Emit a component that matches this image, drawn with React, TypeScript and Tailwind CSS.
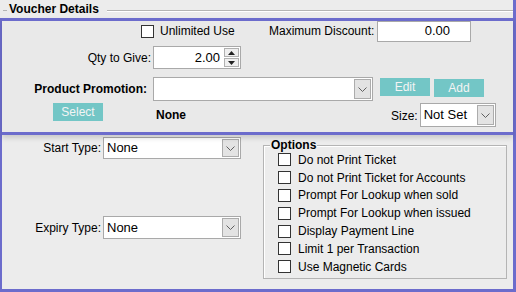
import React from 'react';

const purple = 'border-[#6c6ccc]';

const Chevron: React.FC = () => (
  <svg width="9" height="5" viewBox="0 0 9 5">
    <path d="M0.5 0.5 L4.5 4.5 L8.5 0.5" stroke="#606060" strokeWidth="1" fill="none" />
  </svg>
);

const Check: React.FC = () => (
  <span className="block h-[13px] w-[13px] shrink-0 border border-[#333] bg-white" />
);

const Combo: React.FC<{ value?: string; w: string; h: string }> = ({ value, w, h }) => (
  <div className={`flex shrink-0 items-stretch border border-[#a9a9a9] bg-white ${w} ${h}`}>
    <span className="flex flex-1 items-center pl-[3px] text-[13px]">{value}</span>
    <span className="m-px flex w-[17px] items-center justify-center border border-[#acacac] bg-[#e3e3e3]">
      <Chevron />
    </span>
  </div>
);

const TealButton: React.FC<{ label: string; className?: string }> = ({ label, className = '' }) => (
  <div
    className={`flex h-[18px] w-[50px] shrink-0 items-center justify-center bg-[#73c6c6] text-[12px] text-[#f4f4f4] ${className}`}
  >
    {label}
  </div>
);

const options = [
  'Do not Print Ticket',
  'Do not Print Ticket for Accounts',
  'Prompt For Lookup when sold',
  'Prompt For Lookup when issued',
  'Display Payment Line',
  'Limit 1 per Transaction',
  'Use Magnetic Cards',
];

export default function App() {
  return (
    <div
      className={`flex h-[292px] w-[516px] flex-col border-r-[3px] bg-[#ececec] text-[12px] leading-[14px] text-black ${purple}`}
      style={{ fontFamily: '"Liberation Sans", Arial, sans-serif' }}
    >
      {/* group header */}
      <div className="flex h-[18px] shrink-0 items-center pl-[3px]">
        <span className="mt-[3px] h-px w-[4px] bg-[#b4b4b4]" />
        <span className="ml-[2px] text-[12px] font-bold">Voucher Details</span>
        <span className="mt-[3px] ml-[8px] h-[2px] flex-1 border-t border-[#b4b4b4] bg-white" />
      </div>

      <div className={`flex flex-1 flex-col border-b-[3px] border-l-2 ${purple}`}>
        {/* highlighted panel */}
        <div
          className={`relative z-10 flex h-[117px] shrink-0 flex-col border-y-[3px] bg-[#e9e9e9] shadow-[0_3px_5px_rgba(0,0,0,0.15)] ${purple}`}
        >
          <div className="flex h-[20px] items-center">
            <span className="w-[139px]" />
            <Check />
            <span className="ml-[6px] w-[109px]">Unlimited Use</span>
            <span className="w-[108px]">Maximum Discount:</span>
            <div className="flex h-[21px] w-[94px] items-center justify-end border border-[#a9a9a9] bg-white pr-[20px] text-[13px]">
              0.00
            </div>
          </div>

          <div className="mt-[5px] flex h-[23px] items-center">
            <span className="w-[149px] text-right">Qty to Give:</span>
            <div className="ml-[2px] flex h-[23px] w-[88px] border border-[#a9a9a9] bg-white">
              <span className="flex flex-1 items-center justify-end pr-[3px] text-[13px]">2.00</span>
              <div className="m-px flex w-[15px] flex-col gap-px">
                <span className="flex flex-1 items-center justify-center border border-[#b0b0b0] bg-[#efefef]">
                  <svg width="7" height="4" viewBox="0 0 7 4">
                    <path d="M0 4 L3.5 0 L7 4 Z" fill="#222" />
                  </svg>
                </span>
                <span className="flex flex-1 items-center justify-center border border-[#b0b0b0] bg-[#efefef]">
                  <svg width="7" height="4" viewBox="0 0 7 4">
                    <path d="M0 0 L3.5 4 L7 0 Z" fill="#222" />
                  </svg>
                </span>
              </div>
            </div>
          </div>

          <div className="mt-[8px] flex h-[24px] items-start">
            <span className="mt-[5px] w-[145px] text-right font-bold">Product Promotion:</span>
            <div className="ml-[6px]">
              <Combo w="w-[220px]" h="h-[24px]" />
            </div>
            <TealButton label="Edit" className="mt-px ml-[7px]" />
            <TealButton label="Add" className="mt-[2px] ml-[4px]" />
          </div>

          <div className="mt-[2px] flex items-start">
            <TealButton label="Select" className="ml-[51px]" />
            <span className="mt-[5px] ml-[53px] w-[235px] font-bold">None</span>
            <span className="mt-[6px]">Size:</span>
            <div className="ml-[2px]">
              <Combo value="Not Set" w="w-[76px]" h="h-[24px]" />
            </div>
          </div>
        </div>

        {/* lower section */}
        <div className="flex flex-1">
          <div className="flex flex-col">
            <div className="mt-[2px] flex items-center">
              <span className="w-[99px] text-right">Start Type:</span>
              <div className="ml-[2px]">
                <Combo value="None" w="w-[138px]" h="h-[22px]" />
              </div>
            </div>
            <div className="mt-[57px] flex items-center">
              <span className="w-[99px] text-right">Expiry Type:</span>
              <div className="ml-[2px]">
                <Combo value="None" w="w-[138px]" h="h-[23px]" />
              </div>
            </div>
          </div>

          <div className="relative mt-[10px] ml-[22px] h-[134px] w-[244px] border border-[#b4b4b4] shadow-[inset_1px_1px_0_#fff]">
            <span className="absolute -top-[8px] left-[6px] bg-[#ececec] px-[1px] font-bold">Options</span>
            <div className="flex flex-col pt-[5px]">
              {options.map(o => (
                <div key={o} className="flex h-[17.8px] items-center pl-[14px]">
                  <Check />
                  <span className="ml-[7px]">{o}</span>
                </div>
              ))}
            </div>
          </div>
        </div>
      </div>
    </div>
  );
}
